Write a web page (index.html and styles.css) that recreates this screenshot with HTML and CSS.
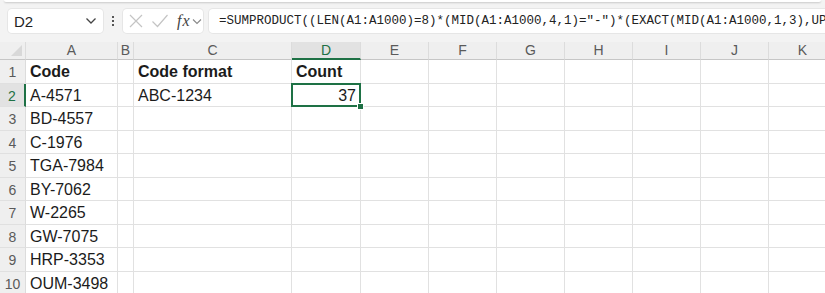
FILE: index.html
```html
<!DOCTYPE html>
<html lang="en">
<head>
    <meta charset="UTF-8">
    <meta name="viewport" content="width=device-width, initial-scale=1.0">
    <title>Code format count</title>
    <link rel="stylesheet" href="styles.css">
</head>
<body>
    <div class="ribbon-edge"></div>

    <div class="formula-bar">
        <div class="name-box">
            <span>D2</span>
            <svg class="chev" width="12" height="8" viewBox="0 0 12 8"><path d="M1.5 1.5 L6 6 L10.5 1.5" fill="none" stroke="#444" stroke-width="1.3"/></svg>
        </div>
        <div class="grip"><i></i><i></i><i></i></div>
        <div class="fx-box">
            <svg width="16" height="16" viewBox="0 0 16 16"><path d="M2 2 L14 14 M14 2 L2 14" stroke="#c4c4c4" stroke-width="1.2" fill="none"/></svg>
            <svg width="18" height="16" viewBox="0 0 18 16"><path d="M1.5 8.5 L6.5 13.5 L16.5 2" stroke="#c4c4c4" stroke-width="1.2" fill="none"/></svg>
            <span class="fx"><i>f</i><i>x</i></span>
            <svg class="chev" width="10" height="7" viewBox="0 0 10 7"><path d="M1 1.5 L5 5.5 L9 1.5" fill="none" stroke="#888" stroke-width="1.1"/></svg>
        </div>
        <div class="formula-input">=SUMPRODUCT((LEN(A1:A1000)=8)*(MID(A1:A1000,4,1)="-")*(EXACT(MID(A1:A1000,1,3),UPPER(MID(A1:A1000,1,3)))))</div>
    </div>

    <div class="sheet">
        <!-- column headers -->
        <div class="corner"></div>
        <div class="col-head">A</div>
        <div class="col-head">B</div>
        <div class="col-head">C</div>
        <div class="col-head active">D</div>
        <div class="col-head">E</div>
        <div class="col-head">F</div>
        <div class="col-head">G</div>
        <div class="col-head">H</div>
        <div class="col-head">I</div>
        <div class="col-head">J</div>
        <div class="col-head">K</div>

        <div class="row-head">1</div>
        <div class="cell bold">Code</div><div class="cell"></div><div class="cell bold">Code format</div><div class="cell bold">Count</div>
        <div class="cell"></div><div class="cell"></div><div class="cell"></div><div class="cell"></div><div class="cell"></div><div class="cell"></div><div class="cell"></div>

        <div class="row-head active">2</div>
        <div class="cell">A-4571</div><div class="cell"></div><div class="cell">ABC-1234</div><div class="cell num selected">37</div>
        <div class="cell"></div><div class="cell"></div><div class="cell"></div><div class="cell"></div><div class="cell"></div><div class="cell"></div><div class="cell"></div>

        <div class="row-head">3</div>
        <div class="cell">BD-4557</div><div class="cell"></div><div class="cell"></div><div class="cell"></div>
        <div class="cell"></div><div class="cell"></div><div class="cell"></div><div class="cell"></div><div class="cell"></div><div class="cell"></div><div class="cell"></div>

        <div class="row-head">4</div>
        <div class="cell">C-1976</div><div class="cell"></div><div class="cell"></div><div class="cell"></div>
        <div class="cell"></div><div class="cell"></div><div class="cell"></div><div class="cell"></div><div class="cell"></div><div class="cell"></div><div class="cell"></div>

        <div class="row-head">5</div>
        <div class="cell">TGA-7984</div><div class="cell"></div><div class="cell"></div><div class="cell"></div>
        <div class="cell"></div><div class="cell"></div><div class="cell"></div><div class="cell"></div><div class="cell"></div><div class="cell"></div><div class="cell"></div>

        <div class="row-head">6</div>
        <div class="cell">BY-7062</div><div class="cell"></div><div class="cell"></div><div class="cell"></div>
        <div class="cell"></div><div class="cell"></div><div class="cell"></div><div class="cell"></div><div class="cell"></div><div class="cell"></div><div class="cell"></div>

        <div class="row-head">7</div>
        <div class="cell">W-2265</div><div class="cell"></div><div class="cell"></div><div class="cell"></div>
        <div class="cell"></div><div class="cell"></div><div class="cell"></div><div class="cell"></div><div class="cell"></div><div class="cell"></div><div class="cell"></div>

        <div class="row-head">8</div>
        <div class="cell">GW-7075</div><div class="cell"></div><div class="cell"></div><div class="cell"></div>
        <div class="cell"></div><div class="cell"></div><div class="cell"></div><div class="cell"></div><div class="cell"></div><div class="cell"></div><div class="cell"></div>

        <div class="row-head">9</div>
        <div class="cell">HRP-3353</div><div class="cell"></div><div class="cell"></div><div class="cell"></div>
        <div class="cell"></div><div class="cell"></div><div class="cell"></div><div class="cell"></div><div class="cell"></div><div class="cell"></div><div class="cell"></div>

        <div class="row-head">10</div>
        <div class="cell">OUM-3498</div><div class="cell"></div><div class="cell"></div><div class="cell"></div>
        <div class="cell"></div><div class="cell"></div><div class="cell"></div><div class="cell"></div><div class="cell"></div><div class="cell"></div><div class="cell"></div>
    </div>
</body>
</html>
```

FILE: styles.css
```css
body {
    margin: 0;
    width: 825px;
    height: 293px;
    overflow: hidden;
    background-color: #f3f3f3;
    font-family: "Liberation Sans", Arial, sans-serif;
    color: #1b1b1b;
}
.ribbon-edge {
    height: 2px;
    margin: 0 4px;
    background-color: #fff;
    border-radius: 0 0 6px 6px;
    box-shadow: 0 1px 2px rgba(0, 0, 0, 0.18);
}
.formula-bar {
    display: flex;
    align-items: center;
    height: 38px;
    padding-left: 8px;
}
.name-box {
    display: flex;
    align-items: center;
    justify-content: space-between;
    box-sizing: border-box;
    width: 95px;
    height: 24px;
    padding: 0 6px 0 6px;
    background-color: #fff;
    border-radius: 4px;
    box-shadow: 0 0 0 1px #e6e6e6;
    font-size: 15px;
    color: #1f1f1f;
}
.grip {
    display: flex;
    flex-direction: column;
    gap: 2px;
    width: 20px;
    align-items: center;
}
.grip i {
    width: 2px;
    height: 2px;
    background-color: #555;
}
.fx-box {
    display: flex;
    align-items: center;
    gap: 7px;
    box-sizing: border-box;
    width: 80px;
    height: 24px;
    padding-left: 5px;
    background-color: #fff;
    border-radius: 4px;
    box-shadow: 0 0 0 1px #e6e6e6;
}
.fx {
    font-family: "Liberation Serif", serif;
    font-style: italic;
    font-size: 16px;
    color: #444;
    margin-left: 1px;
    margin-right: -5px;
}
.fx i:first-child {
    margin-right: 1px;
}
.fx-box .chev {
    margin-left: 0;
}
.formula-input {
    flex: 1;
    margin-left: 6px;
    height: 24px;
    line-height: 24px;
    padding-left: 10px;
    background-color: #fff;
    border-radius: 4px 0 0 4px;
    box-shadow: 0 0 0 1px #e6e6e6;
    font-family: "Liberation Mono", monospace;
    font-size: 12.5px;
    color: #222;
    white-space: nowrap;
    overflow: hidden;
}
.sheet {
    display: grid;
    grid-template-columns: 26px 92px 16px 158px 69px 68px 68px 68px 68px 68px 68px 68px;
    grid-template-rows: 18px;
    grid-auto-rows: 23.5px;
    margin-top: 2px;
    background-color: #fff;
}
.corner {
    position: relative;
    background-color: #efefef;
    border-right: 1px solid #dcdcdc;
    border-bottom: 1px solid #c6c6c6;
}
.corner::after {
    content: "";
    position: absolute;
    right: 3px;
    bottom: 3px;
    border-left: 11px solid transparent;
    border-bottom: 11px solid #d8d8d8;
}
.col-head {
    background-color: #efefef;
    border-right: 1px solid #dcdcdc;
    border-bottom: 1px solid #c6c6c6;
    text-align: center;
    font-size: 14px;
    line-height: 17px;
    color: #5a5a5a;
}
.col-head.active {
    background-color: #e2e2e2;
    color: #1e7145;
    border-bottom: 2px solid #1e7145;
    line-height: 16px;
}
.row-head {
    background-color: #efefef;
    border-right: 1px solid #dcdcdc;
    border-bottom: 1px solid #e0e0e0;
    text-align: center;
    font-size: 14px;
    line-height: 24px;
    color: #5a5a5a;
}
.row-head.active {
    background-color: #e2e2e2;
    color: #1e7145;
    border-right: 2px solid #1e7145;
}
.cell {
    border-right: 1px solid #e1e1e1;
    border-bottom: 1px solid #e1e1e1;
    padding-left: 4px;
    font-size: 16px;
    line-height: 24px;
    white-space: nowrap;
    overflow: visible;
}
.cell.bold {
    font-weight: bold;
}
.cell.num {
    text-align: right;
    padding-right: 4px;
}
.selected {
    position: relative;
}
.selected::before {
    content: "";
    position: absolute;
    left: -1px;
    top: -1px;
    right: -1px;
    bottom: -1px;
    border: 2px solid #1e7145;
}
.selected::after {
    content: "";
    position: absolute;
    right: -4px;
    bottom: -4px;
    width: 5px;
    height: 5px;
    background-color: #1e7145;
    border: 1px solid #fff;
}
```
